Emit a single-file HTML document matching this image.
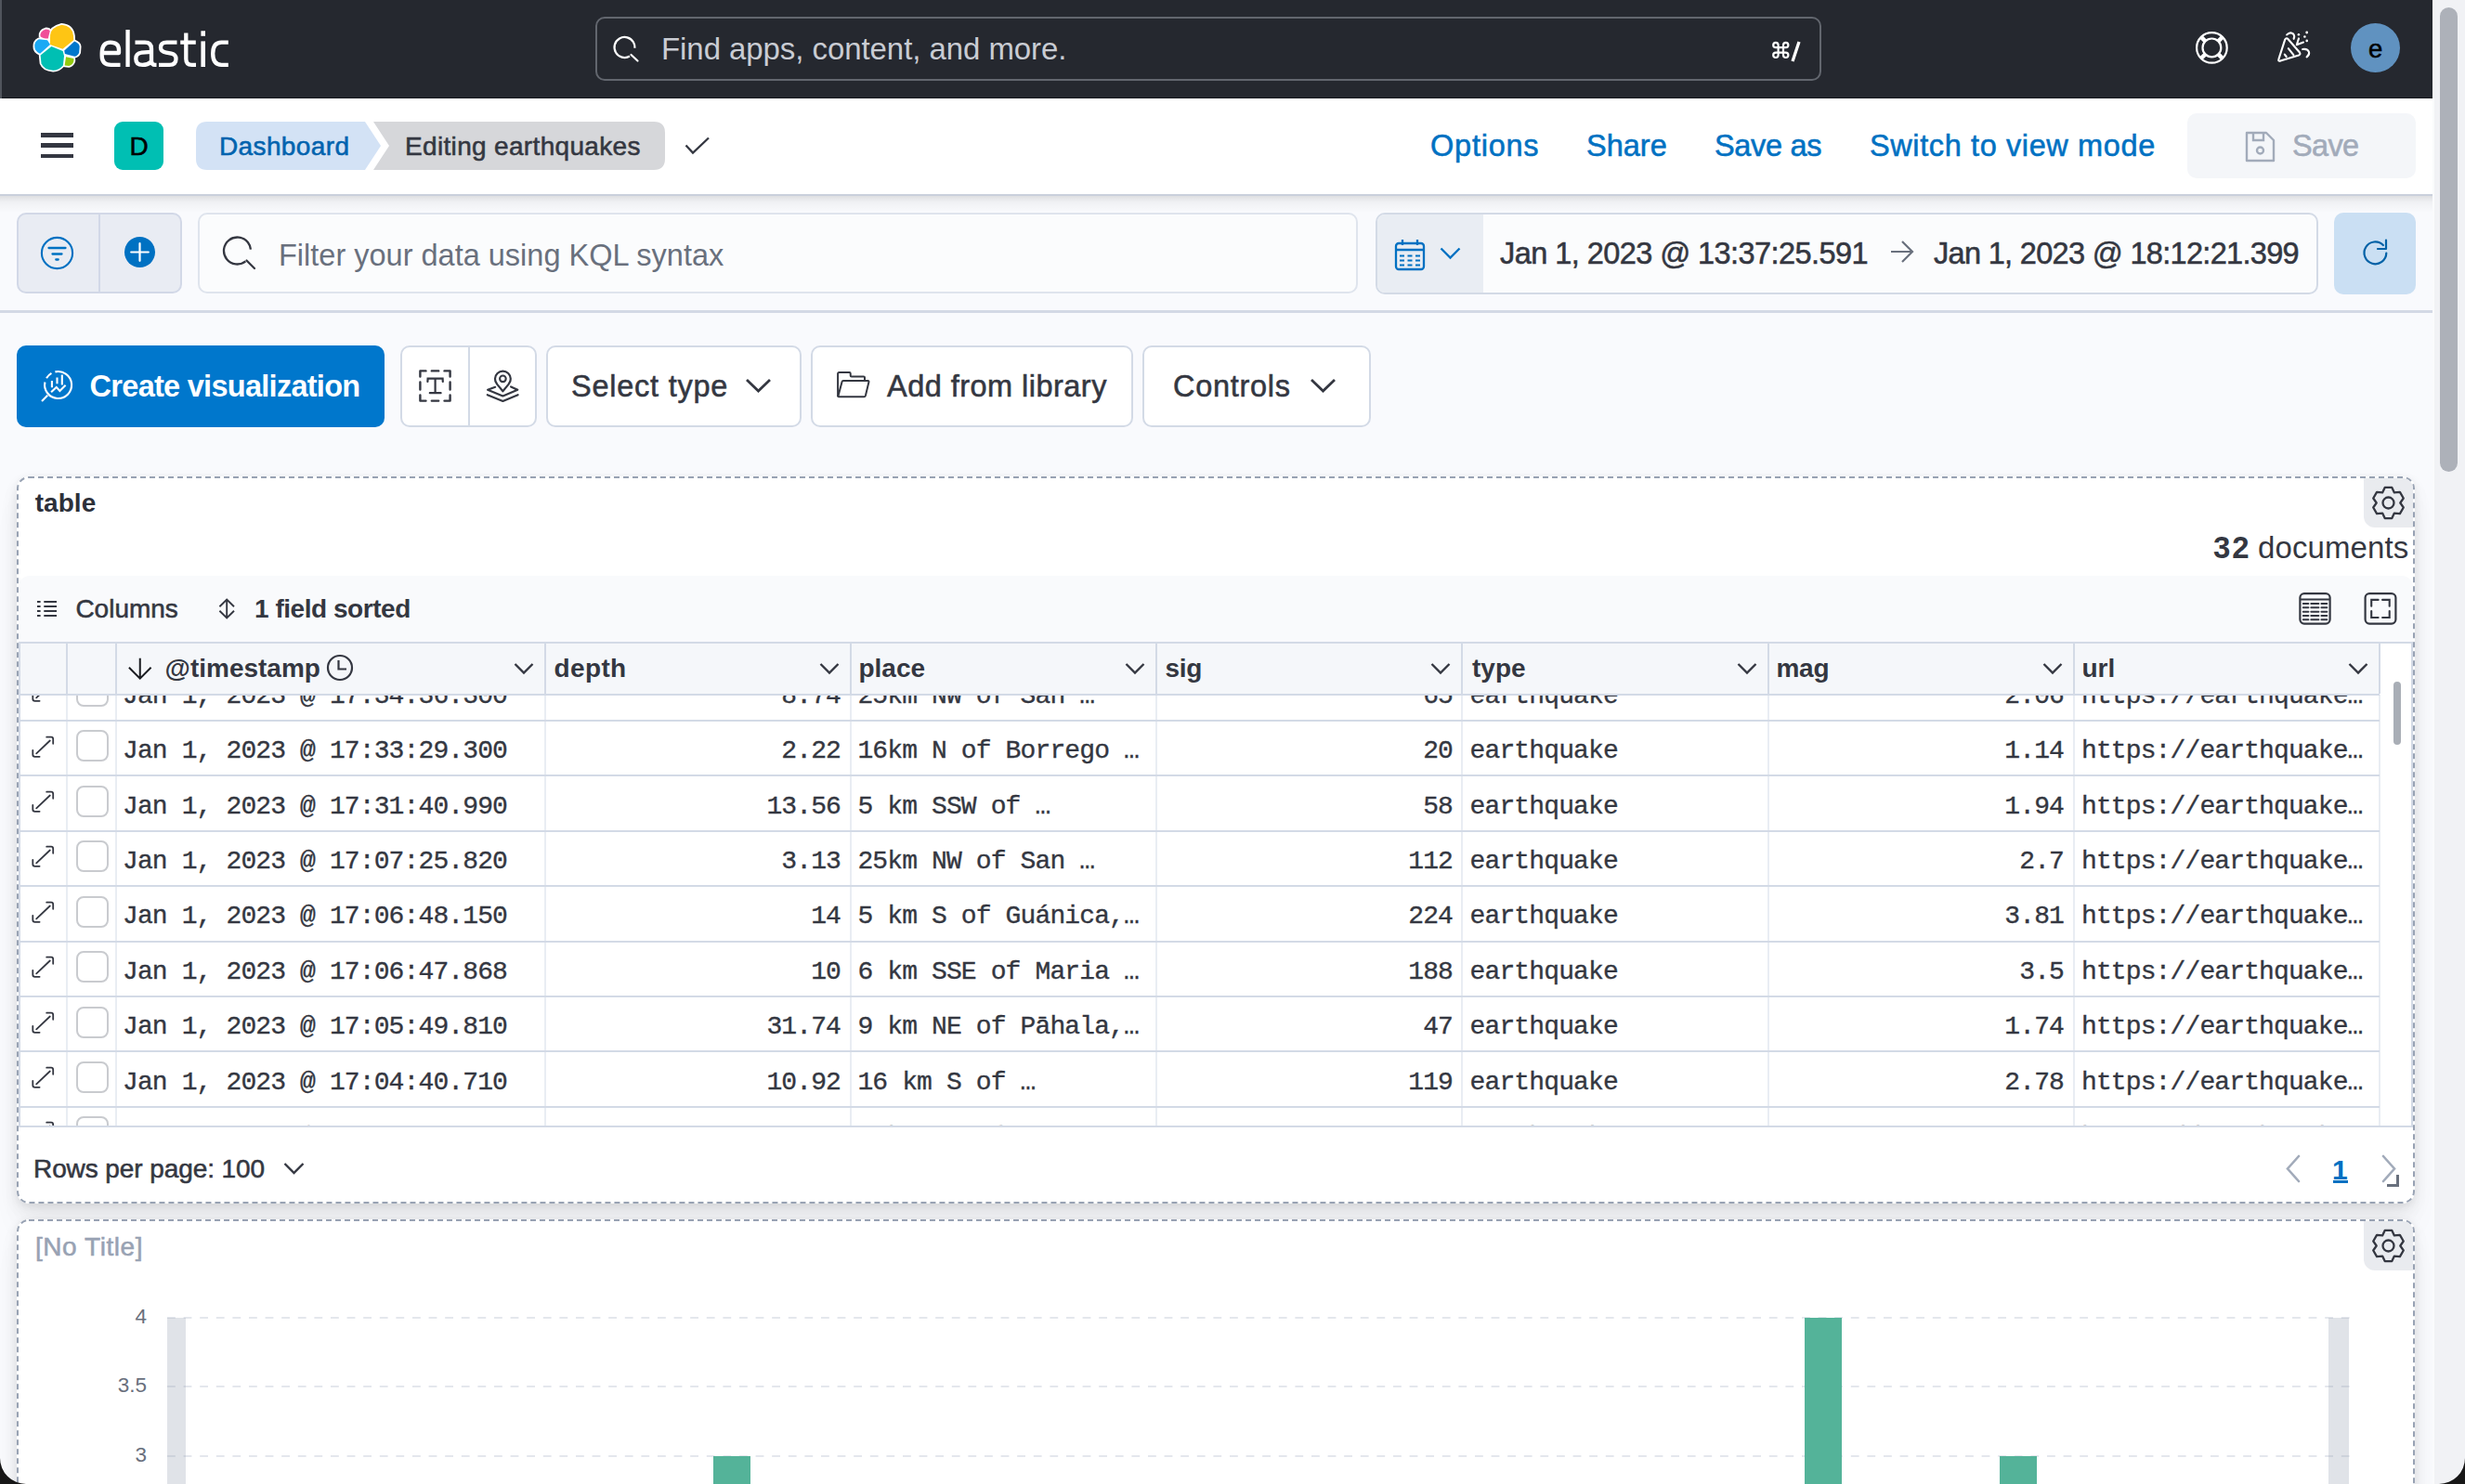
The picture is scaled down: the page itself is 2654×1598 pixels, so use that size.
<!DOCTYPE html>
<html><head><meta charset="utf-8"><title>Editing earthquakes - Dashboard - Elastic</title>
<style>
html,body{margin:0;padding:0;}
body{width:2654px;height:1598px;position:relative;overflow:hidden;background:#f9fafd;font-family:"Liberation Sans",sans-serif;}
.t{position:absolute;white-space:pre;line-height:1;}
.b{position:absolute;box-sizing:border-box;}
svg.b{overflow:visible;}
</style></head><body>
<div class="b" style="left:0px;top:0px;width:2619px;height:106px;background:#25282f"></div><div class="b" style="left:0px;top:0px;width:2px;height:106px;background:#50545c"></div><div class="b" style="left:2px;top:104.7px;width:2617px;height:1.2999999999999972px;background:#16191e"></div><svg class="b" style="left:0px;top:0px;" width="100" height="100" viewBox="0 0 100 100">
<g stroke="#fff" stroke-width="3.6" stroke-linejoin="round">
<path d="M49.3,31.4 Q53,31.6 53.8,33.2 L51.8,41.6 Q46,41.5 43.5,39.2 Q42.6,33.5 49.3,31.4Z"/>
<path d="M66.4,26.8 Q77.5,27.5 79,38.5 L79.2,43.2 L67.5,52.7 L53.9,48 L54.1,37.5 Q55,29.5 66.4,26.8Z"/>
<path d="M41.8,42.2 L51,43.2 L54,48 L43.1,57.8 Q37,55 37.3,50 Q36.8,45 41.8,42.2Z"/>
<path d="M55.4,50.1 L67.7,55 L69,60.3 L67.9,70.4 Q63,75.8 57.2,75.7 Q47,75 44.5,68.2 L43.6,59.4Z"/>
<path d="M80.2,44.4 Q85.5,46.5 85.7,50 L85.2,56.8 Q83.5,60.5 80.4,60.8 L69.9,58.1 L69.2,54.6Z"/>
<path d="M71,61.3 L79.3,63.1 Q79.8,66 79,67 Q77,70.8 74.2,70.9 L69.6,70.4Z"/>
</g>
<g stroke="none">
<path fill="#f04e98" d="M49.3,31.4 Q53,31.6 53.8,33.2 L51.8,41.6 Q46,41.5 43.5,39.2 Q42.6,33.5 49.3,31.4Z"/>
<path fill="#fec514" d="M66.4,26.8 Q77.5,27.5 79,38.5 L79.2,43.2 L67.5,52.7 L53.9,48 L54.1,37.5 Q55,29.5 66.4,26.8Z"/>
<path fill="#1ba9f5" d="M41.8,42.2 L51,43.2 L54,48 L43.1,57.8 Q37,55 37.3,50 Q36.8,45 41.8,42.2Z"/>
<path fill="#00bfb3" d="M55.4,50.1 L67.7,55 L69,60.3 L67.9,70.4 Q63,75.8 57.2,75.7 Q47,75 44.5,68.2 L43.6,59.4Z"/>
<path fill="#0077cc" d="M80.2,44.4 Q85.5,46.5 85.7,50 L85.2,56.8 Q83.5,60.5 80.4,60.8 L69.9,58.1 L69.2,54.6Z"/>
<path fill="#93c90e" d="M71,61.3 L79.3,63.1 Q79.8,66 79,67 Q77,70.8 74.2,70.9 L69.6,70.4Z"/>
</g></svg><svg class="b" style="left:0px;top:0px;" width="260" height="100" viewBox="0 0 260 100"><g fill="none" stroke="#fff" stroke-width="4.3" stroke-linejoin="round"><path d="M109.7,57 L128,57 L128,54 Q128,45.6 118.9,45.6 Q109.7,45.6 109.7,57.5 L109.7,60 Q109.7,69.9 119.5,69.9 L129.5,69.9"/><path d="M145.5,45.6 L156,45.6 Q163,45.6 163,52.5 L163,65.5 Q163,69.9 167,69.9 L168.5,69.9"/><path d="M163,55.8 L152.5,56.6 Q146.3,57.3 146.3,63.2 Q146.3,69.9 153.5,69.9 Q159,69.9 163,66.5"/><path d="M190.5,45.6 L179.5,45.6 Q173,45.6 173,51.2 Q173,55.6 179,56.6 L184.5,57.6 Q189.5,58.6 189.5,63.6 Q189.5,69.9 182.5,69.9 L171,69.9"/><path d="M200.3,35.6 L200.3,63.5 Q200.3,69.9 206.5,69.9 L211,69.9 M194.2,45.6 L210.8,45.6"/><path d="M245.8,45.6 L238.5,45.6 Q229.2,45.6 229.2,57.8 Q229.2,69.9 238.5,69.9 L245.8,69.9"/></g><rect x="135.4" y="32" width="4.3" height="40" fill="#fff"/><rect x="216.4" y="44.4" width="4.6" height="27.6" fill="#fff"/><rect x="216.4" y="33.3" width="4.6" height="5.5" fill="#fff"/></svg><div class="b" style="left:641px;top:17.5px;width:1320px;height:69.0px;border:2px solid #62666e;border-radius:10px;background:#25282f"></div><svg class="b" style="left:655px;top:36px;" width="36" height="34" viewBox="0 0 36 34"><circle cx="17.5" cy="15" r="11" fill="none" stroke="#fff" stroke-width="2.2" stroke-dasharray="58 11" transform="rotate(60 17.5 15)"/><path d="M24.5,23 L31.5,29.5" stroke="#fff" stroke-width="2.2" stroke-linecap="round"/></svg><div class="t" style="left:712.0px;top:36.0px;font-size:33px;color:#c9ccd3;font-weight:400;letter-spacing:-0.07px;font-family:'Liberation Sans', sans-serif;">Find apps, content, and more.</div><svg class="b" style="left:1900px;top:40px;" width="30" height="30" viewBox="0 0 30 30"><g transform="translate(9.2,5.8) scale(0.9) translate(-3,-3)"><path d="M15 6v12a3 3 0 1 0 3-3H6a3 3 0 1 0 3 3V6a3 3 0 1 0-3 3h12a3 3 0 1 0-3-3" fill="none" stroke="#fff" stroke-width="2.4"/></g></svg><svg class="b" style="left:1926px;top:44px;" width="14" height="24" viewBox="0 0 14 24"><path d="M11,1 L4,22" stroke="#fff" stroke-width="3.3" stroke-linecap="butt"/></svg><svg class="b" style="left:2361px;top:31px;" width="40" height="40" viewBox="0 0 40 40"><circle cx="20.4" cy="20.4" r="16.3" fill="none" stroke="#fff" stroke-width="2.2"/><circle cx="20.4" cy="20.4" r="9.9" fill="none" stroke="#fff" stroke-width="2.2"/><path d="M8.9,8.9 L13.4,13.4 M31.9,8.9 L27.4,13.4 M8.9,31.9 L13.4,27.4 M31.9,31.9 L27.4,27.4" stroke="#fff" stroke-width="4.4"/></svg><svg class="b" style="left:2440px;top:25px;" width="60" height="50" viewBox="0 0 60 50"><g fill="none" stroke="#fff" stroke-width="2.1" stroke-linecap="round" stroke-linejoin="round"><path d="M20.2,17.6 Q21.8,15.2 23.6,17.2 L36,31.5 Q37.3,33.6 35,34.4 L15.2,40.6 Q12.4,41.2 13.5,38.4 Z"/><path d="M23.8,27.2 L29.4,34.2 M19.8,33.6 L21.7,36"/><path d="M22.2,12.4 Q25.8,8.6 29.2,11.6 Q31,13.8 29.6,16.8"/><path d="M35,16.4 L32.8,23.2 L40,20.6"/><path d="M39.2,28 Q44.6,27.2 46,31 Q46.8,34 43.6,36.4"/></g><g fill="#fff"><circle cx="34.9" cy="12.2" r="1.3"/><circle cx="43.7" cy="10" r="1.4"/><circle cx="41.4" cy="14.5" r="1.3"/><circle cx="43.7" cy="18.9" r="1.3"/></g></svg><div class="b" style="left:2531px;top:25px;width:53px;height:53px;border-radius:50%;background:#6092c0"></div><div class="t" style="left:2550.0px;top:38.9px;font-size:27.5px;color:#000000;font-weight:400;letter-spacing:0px;font-family:'Liberation Sans', sans-serif;-webkit-text-stroke:0.55px #000000;">e</div><div class="b" style="left:2619px;top:0px;width:35px;height:1598px;background:#f1f2f5;border-left:2px solid #fafbfc"></div><div class="b" style="left:2627px;top:8px;width:19px;height:500px;background:#adb1b9;border-radius:10px"></div><div class="b" style="left:0px;top:106px;width:2619px;height:103px;background:#ffffff"></div><div class="b" style="left:44px;top:143px;width:35px;height:4.5px;background:#343741"></div><div class="b" style="left:44px;top:154px;width:35px;height:4.5px;background:#343741"></div><div class="b" style="left:44px;top:165.5px;width:35px;height:4.5px;background:#343741"></div><div class="b" style="left:123px;top:131px;width:53px;height:52px;background:#00bfb3;border-radius:9px"></div><div class="t" style="left:139.5px;top:144.2px;font-size:28px;color:#000000;font-weight:400;letter-spacing:0px;font-family:'Liberation Sans', sans-serif;-webkit-text-stroke:0.55px #000000;">D</div><svg class="b" style="left:205px;top:125px;" width="520" height="65" viewBox="0 0 520 65"><path d="M6,18 Q6,6 18,6 L188,6 L205,32 L188,58 L18,58 Q6,58 6,46 Z" fill="#d3e2f5"/><path d="M197,6 L499,6 Q511,6 511,18 L511,46 Q511,58 499,58 L197,58 L214,32 Z" fill="#d6d7da"/></svg><div class="t" style="left:236.0px;top:144.2px;font-size:28px;color:#0063ae;font-weight:400;letter-spacing:0.375px;font-family:'Liberation Sans', sans-serif;-webkit-text-stroke:0.55px #0063ae;">Dashboard</div><div class="t" style="left:436.0px;top:144.2px;font-size:28px;color:#343741;font-weight:400;letter-spacing:0.333px;font-family:'Liberation Sans', sans-serif;-webkit-text-stroke:0.55px #343741;">Editing earthquakes</div><svg class="b" style="left:735px;top:145px;" width="32" height="24" viewBox="0 0 32 24"><path d="M3.5,11.5 L11,19.5 L28,3.5" fill="none" stroke="#343741" stroke-width="2.3"/></svg><div class="t" style="left:1540.0px;top:140.9px;font-size:32.5px;color:#0071c2;font-weight:400;letter-spacing:0.77px;font-family:'Liberation Sans', sans-serif;-webkit-text-stroke:0.55px #0071c2;">Options</div><div class="t" style="left:1708.0px;top:140.9px;font-size:32.5px;color:#0071c2;font-weight:400;letter-spacing:0px;font-family:'Liberation Sans', sans-serif;-webkit-text-stroke:0.55px #0071c2;">Share</div><div class="t" style="left:1846.0px;top:140.9px;font-size:32.5px;color:#0071c2;font-weight:400;letter-spacing:-0.33px;font-family:'Liberation Sans', sans-serif;-webkit-text-stroke:0.55px #0071c2;">Save as</div><div class="t" style="left:2013.0px;top:140.9px;font-size:32.5px;color:#0071c2;font-weight:400;letter-spacing:0.61px;font-family:'Liberation Sans', sans-serif;-webkit-text-stroke:0.55px #0071c2;">Switch to view mode</div><div class="b" style="left:2355px;top:122px;width:246px;height:70px;background:#f4f6f9;border-radius:10px"></div><svg class="b" style="left:2416px;top:140px;" width="36" height="36" viewBox="0 0 36 36"><path d="M3,3 L24,3 L32,11 L32,33 L3,33 Z" fill="none" stroke="#a2abba" stroke-width="2.4" stroke-linejoin="round"/><path d="M10,3 L10,11 L21,11 L21,3" fill="none" stroke="#a2abba" stroke-width="2.4"/><circle cx="17.5" cy="22" r="3.5" fill="none" stroke="#a2abba" stroke-width="2.4"/></svg><div class="t" style="left:2468.0px;top:140.9px;font-size:32.5px;color:#a2abba;font-weight:400;letter-spacing:-0.67px;font-family:'Liberation Sans', sans-serif;-webkit-text-stroke:0.55px #a2abba;">Save</div><div class="b" style="left:0px;top:209px;width:2619px;height:126px;background:#f9fafd"></div><div class="b" style="left:0px;top:209px;width:2619px;height:2px;background:#c9d0dc"></div><div class="b" style="left:0px;top:211px;width:2619px;height:18px;background:linear-gradient(rgba(0,0,0,0.11),rgba(0,0,0,0.04) 35%,rgba(0,0,0,0))"></div><div class="b" style="left:0px;top:334px;width:2619px;height:3px;background:#d3d9e5"></div><div class="b" style="left:18px;top:229px;width:178px;height:87px;background:#e9ecf3;border:2px solid #d2d8e7;border-radius:10px"></div><div class="b" style="left:106px;top:230px;width:2px;height:85px;background:#d2d8e7"></div><svg class="b" style="left:42px;top:253px;" width="40" height="40" viewBox="0 0 40 40"><circle cx="19.5" cy="19.5" r="16.6" fill="none" stroke="#0071c2" stroke-width="2.1"/><path d="M10.5,14 L28.5,14 M14.5,20.5 L24.5,20.5 M18.3,26.5 L20.7,26.5" stroke="#0071c2" stroke-width="2.3" stroke-linecap="round"/></svg><svg class="b" style="left:132px;top:254px;" width="38" height="38" viewBox="0 0 38 38"><circle cx="18.5" cy="17.5" r="16.5" fill="#0071c2"/><path d="M18.5,8.2 L18.5,26.8 M9.2,17.5 L27.8,17.5" stroke="#fff" stroke-width="2.2" stroke-linecap="round"/></svg><div class="b" style="left:213px;top:229px;width:1249px;height:87px;background:#fbfcfd;border:2px solid #dfe4ed;border-radius:10px"></div><svg class="b" style="left:236px;top:252px;" width="44" height="42" viewBox="0 0 44 42"><circle cx="19.5" cy="18" r="14.5" fill="none" stroke="#343741" stroke-width="2.3" stroke-dasharray="76 15" transform="rotate(52 19.5 18)"/><path d="M29.5,28.5 L38,37" stroke="#343741" stroke-width="2.3" stroke-linecap="round"/></svg><div class="t" style="left:300.0px;top:259.0px;font-size:32.5px;color:#69707d;font-weight:400;letter-spacing:0px;font-family:'Liberation Sans', sans-serif;">Filter your data using KQL syntax</div><div class="b" style="left:1481px;top:229px;width:1015px;height:88px;background:#fbfcfd;border:2px solid #d3dae6;border-radius:10px"></div><div class="b" style="left:1483px;top:231px;width:114px;height:84px;background:#e9edf3;border-radius:8px 0 0 8px"></div><svg class="b" style="left:1500px;top:256px;" width="40" height="40" viewBox="0 0 40 40"><rect x="3" y="6" width="30" height="28" rx="3" fill="none" stroke="#0071c2" stroke-width="2.3"/><path d="M3,13 L33,13 M10,2 L10,8 M26,2 L26,8" stroke="#0071c2" stroke-width="2.3"/><path d="M7,19.5 L12,19.5 M15.5,19.5 L20.5,19.5 M24,19.5 L29,19.5 M7,24.5 L12,24.5 M15.5,24.5 L20.5,24.5 M24,24.5 L29,24.5 M7,29.5 L12,29.5 M15.5,29.5 L20.5,29.5 M24,29.5 L29,29.5" stroke="#0071c2" stroke-width="2"/></svg><svg class="b" style="left:1549px;top:265px;" width="26" height="16" viewBox="0 0 26 16"><path d="M2.5,2.5 L12.5,12.5 L22.5,2.5" fill="none" stroke="#0071c2" stroke-width="2.4"/></svg><div class="t" style="left:1615.0px;top:256.8px;font-size:32.5px;color:#343741;font-weight:400;letter-spacing:-0.56px;font-family:'Liberation Sans', sans-serif;-webkit-text-stroke:0.55px #343741;">Jan 1, 2023 @ 13:37:25.591</div><svg class="b" style="left:2034px;top:257px;" width="28" height="28" viewBox="0 0 28 28"><path d="M2,14 L25,14 M14,3 L25,14 L14,25" fill="none" stroke="#69707d" stroke-width="2.2"/></svg><div class="t" style="left:2082.0px;top:256.8px;font-size:32.5px;color:#343741;font-weight:400;letter-spacing:-0.68px;font-family:'Liberation Sans', sans-serif;-webkit-text-stroke:0.55px #343741;">Jan 1, 2023 @ 18:12:21.399</div><div class="b" style="left:2513px;top:229px;width:88px;height:88px;background:#cadff3;border-radius:10px"></div><svg class="b" style="left:2537px;top:252px;" width="40" height="40" viewBox="0 0 40 40"><path d="M32.3,20.6 A11.9,11.9 0 1 1 28.9,12" fill="none" stroke="#0061a6" stroke-width="2.2" stroke-linecap="round"/><path d="M23,16 L32,16 L32,6.5" fill="none" stroke="#0061a6" stroke-width="2.2" stroke-linecap="round" stroke-linejoin="round"/></svg><div class="b" style="left:18px;top:372px;width:396px;height:88px;background:#0077cc;border-radius:10px"></div><svg class="b" style="left:30px;top:385px;" width="60" height="60" viewBox="0 0 60 60"><g fill="none" stroke="#fff" stroke-width="2.1"><path d="M29.39,15.36 A14.5,14.5 0 1 1 18.42,26.49"/><path d="M20.04,22.25 A14.5,14.5 0 0 1 25.46,16.88"/><path d="M15,46.9 L21.2,40.7"/><path d="M25.9,25 L25.9,32.3 M31.5,21.4 L31.5,28.3 M36.8,18.6 L36.8,29.5"/><path d="M25.1,37.2 L30.7,31.9 L34.4,36 L40.6,29.7"/></g></svg><div class="t" style="left:96.6px;top:400.4px;font-size:32.5px;color:#ffffff;font-weight:700;letter-spacing:-0.72px;font-family:'Liberation Sans', sans-serif;">Create visualization</div><div class="b" style="left:431px;top:372px;width:147px;height:88px;background:#fff;border:2px solid #d3dae6;border-radius:10px"></div><div class="b" style="left:504px;top:373px;width:2px;height:86px;background:#d3dae6"></div><svg class="b" style="left:449px;top:396px;" width="40" height="40" viewBox="0 0 40 40"><path d="M3.4,9.5 L3.4,3.4 L9.5,3.4 M15.8,3.4 L23.2,3.4 M29.5,3.4 L35.6,3.4 L35.6,9.5 M35.6,15.4 L35.6,23.6 M35.6,29.5 L35.6,35.6 L29.5,35.6 M23.2,35.6 L15.8,35.6 M9.5,35.6 L3.4,35.6 L3.4,29.5 M3.4,23.6 L3.4,15.4" fill="none" stroke="#343741" stroke-width="2.4" stroke-linecap="round" stroke-linejoin="round"/><path d="M11.4,15 L11.6,11.7 L27.6,11.7 L27.8,15 M19.6,11.7 L19.6,27.2 M13.8,27.2 L25.6,27.2" fill="none" stroke="#343741" stroke-width="2.2" stroke-linecap="round"/></svg><svg class="b" style="left:521px;top:396px;" width="42" height="40" viewBox="0 0 42 40"><path d="M20.4,25.3 L14.1,17.6 A8.4,8.4 0 1 1 26.7,17.6 Z" fill="none" stroke="#343741" stroke-width="2.2" stroke-linejoin="round"/><circle cx="20.4" cy="11.8" r="3.3" fill="none" stroke="#343741" stroke-width="2.1"/><path d="M12.2,20.8 L4.1,23.7 L20.4,30.5 L36.3,23.7 L29.1,20.4" fill="none" stroke="#343741" stroke-width="2.2" stroke-linejoin="round" stroke-linecap="round"/><path d="M3.8,29.2 L20.4,36 L36.6,29.2" fill="none" stroke="#343741" stroke-width="2.2" stroke-linecap="round" stroke-linejoin="round"/></svg><div class="b" style="left:588px;top:372px;width:275px;height:88px;background:#fff;border:2px solid #d3dae6;border-radius:10px"></div><div class="t" style="left:615.0px;top:400.4px;font-size:32.5px;color:#343741;font-weight:400;letter-spacing:0.76px;font-family:'Liberation Sans', sans-serif;-webkit-text-stroke:0.55px #343741;">Select type</div><svg class="b" style="left:801px;top:406px;" width="32" height="20" viewBox="0 0 32 20"><path d="M3,3 L15.5,15 L28,3" fill="none" stroke="#343741" stroke-width="2.8"/></svg><div class="b" style="left:873px;top:372px;width:347px;height:88px;background:#fff;border:2px solid #d3dae6;border-radius:10px"></div><svg class="b" style="left:899px;top:397px;" width="40" height="34" viewBox="0 0 40 34"><path d="M3.1,30.3 L3.1,5.5 Q3.1,4 4.6,4 L15.5,4 Q16.7,4 16.7,5.2 L16.7,7.2 Q16.7,8.4 17.9,8.4 L30.8,8.4 Q32,8.4 32,9.6 L32,12.7" fill="none" stroke="#343741" stroke-width="2" stroke-linejoin="round"/><path d="M8.8,13.1 L35.4,13.1 Q36.8,13.3 36.4,14.6 L32.9,29 Q32.5,30.3 31.2,30.3 L4.2,30.3 Q3.2,30.3 3.5,29.3 L7.6,14 Q7.9,13.1 8.8,13.1 Z" fill="none" stroke="#343741" stroke-width="2" stroke-linejoin="round"/></svg><div class="t" style="left:955.0px;top:400.4px;font-size:32.5px;color:#343741;font-weight:400;letter-spacing:0.467px;font-family:'Liberation Sans', sans-serif;-webkit-text-stroke:0.55px #343741;">Add from library</div><div class="b" style="left:1230px;top:372px;width:246px;height:88px;background:#fff;border:2px solid #d3dae6;border-radius:10px"></div><div class="t" style="left:1263.0px;top:400.4px;font-size:32.5px;color:#343741;font-weight:400;letter-spacing:0.714px;font-family:'Liberation Sans', sans-serif;-webkit-text-stroke:0.55px #343741;">Controls</div><svg class="b" style="left:1409px;top:406px;" width="32" height="20" viewBox="0 0 32 20"><path d="M3,3 L15.5,15 L28,3" fill="none" stroke="#343741" stroke-width="2.8"/></svg><div class="b" style="left:18px;top:513px;width:2582px;height:783px;background:#fff;border-radius:13px;box-shadow:0 2px 9px rgba(0,0,0,.06),0 6px 18px rgba(0,0,0,.05),0 13px 26px rgba(0,0,0,.04),0 30px 33px rgba(0,0,0,.03)"></div><div class="t" style="left:37.7px;top:528.2px;font-size:28px;color:#2d3039;font-weight:700;letter-spacing:0.05px;font-family:'Liberation Sans', sans-serif;">table</div><div class="t" style="left:2383.0px;top:572.8px;font-size:33px;color:#343741;font-weight:700;letter-spacing:2px;font-family:'Liberation Sans', sans-serif;">32</div><div class="t" style="left:2431.0px;top:572.8px;font-size:33px;color:#343741;font-weight:400;letter-spacing:0.1px;font-family:'Liberation Sans', sans-serif;">documents</div><div class="b" style="left:20px;top:620px;width:2578px;height:72px;background:#f9fafc;border-radius:12px 12px 0 0"></div><svg class="b" style="left:38px;top:644px;" width="26" height="24" viewBox="0 0 26 24"><path d="M2,4 L5.6,4 M9.3,4 L23,4 M2,9 L5.6,9 M9.3,9 L23,9 M2,14 L5.6,14 M9.3,14 L23,14 M2,19 L5.6,19 M9.3,19 L23,19" stroke="#343741" stroke-width="2"/></svg><div class="t" style="left:81.4px;top:642.2px;font-size:28px;color:#343741;font-weight:400;letter-spacing:0px;font-family:'Liberation Sans', sans-serif;-webkit-text-stroke:0.55px #343741;">Columns</div><svg class="b" style="left:232px;top:642px;" width="24" height="28" viewBox="0 0 24 28"><path d="M12.2,3.5 L12.2,23.5 M4.4,11.2 L12.2,3.5 L20,11.2 M4.4,15.8 L12.2,23.5 L20,15.8" fill="none" stroke="#343741" stroke-width="1.9"/></svg><div class="t" style="left:274.0px;top:642.2px;font-size:28px;color:#343741;font-weight:700;letter-spacing:-0.46px;font-family:'Liberation Sans', sans-serif;">1 field sorted</div><svg class="b" style="left:2473px;top:636px;" width="40" height="40" viewBox="0 0 40 40"><rect x="3.4" y="3.1" width="32.2" height="32.5" rx="4.5" fill="none" stroke="#343741" stroke-width="2.2"/><path d="M3.4,9.5 L35.6,9.5" stroke="#343741" stroke-width="2.2"/><path d="M6.8,14 L12.4,14 M15.3,14 L23.4,14 M26.4,14 L32.3,14 M6.8,18.3 L12.4,18.3 M15.3,18.3 L23.4,18.3 M26.4,18.3 L32.3,18.3 M6.8,22.8 L12.4,22.8 M15.3,22.8 L23.4,22.8 M26.4,22.8 L32.3,22.8 M6.8,27.1 L12.4,27.1 M15.3,27.1 L23.4,27.1 M26.4,27.1 L32.3,27.1 M6.8,31.3 L12.4,31.3 M15.3,31.3 L23.4,31.3 M26.4,31.3 L32.3,31.3" stroke="#343741" stroke-width="2" stroke-linecap="round"/></svg><svg class="b" style="left:2543px;top:636px;" width="40" height="40" viewBox="0 0 40 40"><rect x="3.6" y="3.1" width="32.8" height="32.5" rx="4.5" fill="none" stroke="#343741" stroke-width="2.2"/><path d="M10.2,16.8 L10.2,9.9 L17.6,9.9 M22.1,9.9 L29.7,9.9 L29.7,16.8 M10.2,22 L10.2,29 L17.6,29 M22.1,29 L29.7,29 L29.7,22" fill="none" stroke="#343741" stroke-width="2.1" stroke-linecap="round"/></svg><div class="b" style="left:20px;top:748px;width:2578px;height:465px;overflow:hidden;background:#fff"><div class="b" style="left:51px;top:0px;width:2px;height:465px;background:#e9edf3"></div><div class="b" style="left:104px;top:0px;width:2px;height:465px;background:#e9edf3"></div><div class="b" style="left:566px;top:0px;width:2px;height:465px;background:#e9edf3"></div><div class="b" style="left:895px;top:0px;width:2px;height:465px;background:#e9edf3"></div><div class="b" style="left:1224px;top:0px;width:2px;height:465px;background:#e9edf3"></div><div class="b" style="left:1553px;top:0px;width:2px;height:465px;background:#e9edf3"></div><div class="b" style="left:1883px;top:0px;width:2px;height:465px;background:#e9edf3"></div><div class="b" style="left:2212px;top:0px;width:2px;height:465px;background:#e9edf3"></div><div class="b" style="left:2541px;top:0px;width:2px;height:465px;background:#e9edf3"></div><div class="b" style="left:0px;top:-32.39999999999998px;width:2542px;height:2.0px;background:#d3dae6"></div><svg class="b" style="left:12px;top:-17.9px;" width="30" height="28" viewBox="0 0 30 28"><path d="M7.2,21.3 L21.8,7.5 M18.2,3.7 L23,3.7 Q25.2,3.7 25.2,6 L25.2,10.8 M3.3,18 L3.3,22.5 Q3.3,24.8 5.6,24.8 L10.6,24.8" fill="none" stroke="#343741" stroke-width="1.8" stroke-linecap="round"/></svg><div class="b" style="left:62px;top:-21px;width:35px;height:34px;border:2px solid #c9cbcf;border-radius:8px;background:#fff"></div><div class="t" style="left:112.0px;top:-12.2px;font-size:28px;color:#343741;font-weight:400;letter-spacing:-0.88px;font-family:'Liberation Mono', monospace;-webkit-text-stroke:0.35px #343741;">Jan 1, 2023 @ 17:34:36.300</div><div class="t" style="right:1693.0px;top:-12.2px;font-size:28px;color:#343741;letter-spacing:-0.88px;-webkit-text-stroke:0.35px #343741;font-family:'Liberation Mono', monospace;text-align:right">8.74</div><div class="t" style="left:903.4px;top:-12.2px;font-size:28px;color:#343741;font-weight:400;letter-spacing:-0.88px;font-family:'Liberation Mono', monospace;-webkit-text-stroke:0.35px #343741;">25km NW of San …</div><div class="t" style="right:1034.0px;top:-12.2px;font-size:28px;color:#343741;letter-spacing:-0.88px;-webkit-text-stroke:0.35px #343741;font-family:'Liberation Mono', monospace;text-align:right">65</div><div class="t" style="left:1562.6px;top:-12.2px;font-size:28px;color:#343741;font-weight:400;letter-spacing:-0.88px;font-family:'Liberation Mono', monospace;-webkit-text-stroke:0.35px #343741;">earthquake</div><div class="t" style="right:376.0px;top:-12.2px;font-size:28px;color:#343741;letter-spacing:-0.88px;-webkit-text-stroke:0.35px #343741;font-family:'Liberation Mono', monospace;text-align:right">2.06</div><div class="t" style="left:2221.0px;top:-12.2px;font-size:28px;color:#343741;font-weight:400;letter-spacing:-0.88px;font-family:'Liberation Mono', monospace;-webkit-text-stroke:0.35px #343741;">https://earthquake…</div><div class="b" style="left:0px;top:27.0px;width:2542px;height:2.0px;background:#d3dae6"></div><svg class="b" style="left:12px;top:41.5px;" width="30" height="28" viewBox="0 0 30 28"><path d="M7.2,21.3 L21.8,7.5 M18.2,3.7 L23,3.7 Q25.2,3.7 25.2,6 L25.2,10.8 M3.3,18 L3.3,22.5 Q3.3,24.8 5.6,24.8 L10.6,24.8" fill="none" stroke="#343741" stroke-width="1.8" stroke-linecap="round"/></svg><div class="b" style="left:62px;top:38px;width:35px;height:34px;border:2px solid #c9cbcf;border-radius:8px;background:#fff"></div><div class="t" style="left:112.0px;top:47.2px;font-size:28px;color:#343741;font-weight:400;letter-spacing:-0.88px;font-family:'Liberation Mono', monospace;-webkit-text-stroke:0.35px #343741;">Jan 1, 2023 @ 17:33:29.300</div><div class="t" style="right:1693.0px;top:47.2px;font-size:28px;color:#343741;letter-spacing:-0.88px;-webkit-text-stroke:0.35px #343741;font-family:'Liberation Mono', monospace;text-align:right">2.22</div><div class="t" style="left:903.4px;top:47.2px;font-size:28px;color:#343741;font-weight:400;letter-spacing:-0.88px;font-family:'Liberation Mono', monospace;-webkit-text-stroke:0.35px #343741;">16km N of Borrego …</div><div class="t" style="right:1034.0px;top:47.2px;font-size:28px;color:#343741;letter-spacing:-0.88px;-webkit-text-stroke:0.35px #343741;font-family:'Liberation Mono', monospace;text-align:right">20</div><div class="t" style="left:1562.6px;top:47.2px;font-size:28px;color:#343741;font-weight:400;letter-spacing:-0.88px;font-family:'Liberation Mono', monospace;-webkit-text-stroke:0.35px #343741;">earthquake</div><div class="t" style="right:376.0px;top:47.2px;font-size:28px;color:#343741;letter-spacing:-0.88px;-webkit-text-stroke:0.35px #343741;font-family:'Liberation Mono', monospace;text-align:right">1.14</div><div class="t" style="left:2221.0px;top:47.2px;font-size:28px;color:#343741;font-weight:400;letter-spacing:-0.88px;font-family:'Liberation Mono', monospace;-webkit-text-stroke:0.35px #343741;">https://earthquake…</div><div class="b" style="left:0px;top:86.39999999999998px;width:2542px;height:2.0px;background:#d3dae6"></div><svg class="b" style="left:12px;top:100.9px;" width="30" height="28" viewBox="0 0 30 28"><path d="M7.2,21.3 L21.8,7.5 M18.2,3.7 L23,3.7 Q25.2,3.7 25.2,6 L25.2,10.8 M3.3,18 L3.3,22.5 Q3.3,24.8 5.6,24.8 L10.6,24.8" fill="none" stroke="#343741" stroke-width="1.8" stroke-linecap="round"/></svg><div class="b" style="left:62px;top:98px;width:35px;height:34px;border:2px solid #c9cbcf;border-radius:8px;background:#fff"></div><div class="t" style="left:112.0px;top:106.6px;font-size:28px;color:#343741;font-weight:400;letter-spacing:-0.88px;font-family:'Liberation Mono', monospace;-webkit-text-stroke:0.35px #343741;">Jan 1, 2023 @ 17:31:40.990</div><div class="t" style="right:1693.0px;top:106.6px;font-size:28px;color:#343741;letter-spacing:-0.88px;-webkit-text-stroke:0.35px #343741;font-family:'Liberation Mono', monospace;text-align:right">13.56</div><div class="t" style="left:903.4px;top:106.6px;font-size:28px;color:#343741;font-weight:400;letter-spacing:-0.88px;font-family:'Liberation Mono', monospace;-webkit-text-stroke:0.35px #343741;">5 km SSW of …</div><div class="t" style="right:1034.0px;top:106.6px;font-size:28px;color:#343741;letter-spacing:-0.88px;-webkit-text-stroke:0.35px #343741;font-family:'Liberation Mono', monospace;text-align:right">58</div><div class="t" style="left:1562.6px;top:106.6px;font-size:28px;color:#343741;font-weight:400;letter-spacing:-0.88px;font-family:'Liberation Mono', monospace;-webkit-text-stroke:0.35px #343741;">earthquake</div><div class="t" style="right:376.0px;top:106.6px;font-size:28px;color:#343741;letter-spacing:-0.88px;-webkit-text-stroke:0.35px #343741;font-family:'Liberation Mono', monospace;text-align:right">1.94</div><div class="t" style="left:2221.0px;top:106.6px;font-size:28px;color:#343741;font-weight:400;letter-spacing:-0.88px;font-family:'Liberation Mono', monospace;-webkit-text-stroke:0.35px #343741;">https://earthquake…</div><div class="b" style="left:0px;top:145.79999999999995px;width:2542px;height:2.0px;background:#d3dae6"></div><svg class="b" style="left:12px;top:160.3px;" width="30" height="28" viewBox="0 0 30 28"><path d="M7.2,21.3 L21.8,7.5 M18.2,3.7 L23,3.7 Q25.2,3.7 25.2,6 L25.2,10.8 M3.3,18 L3.3,22.5 Q3.3,24.8 5.6,24.8 L10.6,24.8" fill="none" stroke="#343741" stroke-width="1.8" stroke-linecap="round"/></svg><div class="b" style="left:62px;top:157px;width:35px;height:34px;border:2px solid #c9cbcf;border-radius:8px;background:#fff"></div><div class="t" style="left:112.0px;top:166.0px;font-size:28px;color:#343741;font-weight:400;letter-spacing:-0.88px;font-family:'Liberation Mono', monospace;-webkit-text-stroke:0.35px #343741;">Jan 1, 2023 @ 17:07:25.820</div><div class="t" style="right:1693.0px;top:166.0px;font-size:28px;color:#343741;letter-spacing:-0.88px;-webkit-text-stroke:0.35px #343741;font-family:'Liberation Mono', monospace;text-align:right">3.13</div><div class="t" style="left:903.4px;top:166.0px;font-size:28px;color:#343741;font-weight:400;letter-spacing:-0.88px;font-family:'Liberation Mono', monospace;-webkit-text-stroke:0.35px #343741;">25km NW of San …</div><div class="t" style="right:1034.0px;top:166.0px;font-size:28px;color:#343741;letter-spacing:-0.88px;-webkit-text-stroke:0.35px #343741;font-family:'Liberation Mono', monospace;text-align:right">112</div><div class="t" style="left:1562.6px;top:166.0px;font-size:28px;color:#343741;font-weight:400;letter-spacing:-0.88px;font-family:'Liberation Mono', monospace;-webkit-text-stroke:0.35px #343741;">earthquake</div><div class="t" style="right:376.0px;top:166.0px;font-size:28px;color:#343741;letter-spacing:-0.88px;-webkit-text-stroke:0.35px #343741;font-family:'Liberation Mono', monospace;text-align:right">2.7</div><div class="t" style="left:2221.0px;top:166.0px;font-size:28px;color:#343741;font-weight:400;letter-spacing:-0.88px;font-family:'Liberation Mono', monospace;-webkit-text-stroke:0.35px #343741;">https://earthquake…</div><div class="b" style="left:0px;top:205.20000000000005px;width:2542px;height:2.0px;background:#d3dae6"></div><svg class="b" style="left:12px;top:219.7px;" width="30" height="28" viewBox="0 0 30 28"><path d="M7.2,21.3 L21.8,7.5 M18.2,3.7 L23,3.7 Q25.2,3.7 25.2,6 L25.2,10.8 M3.3,18 L3.3,22.5 Q3.3,24.8 5.6,24.8 L10.6,24.8" fill="none" stroke="#343741" stroke-width="1.8" stroke-linecap="round"/></svg><div class="b" style="left:62px;top:217px;width:35px;height:34px;border:2px solid #c9cbcf;border-radius:8px;background:#fff"></div><div class="t" style="left:112.0px;top:225.4px;font-size:28px;color:#343741;font-weight:400;letter-spacing:-0.88px;font-family:'Liberation Mono', monospace;-webkit-text-stroke:0.35px #343741;">Jan 1, 2023 @ 17:06:48.150</div><div class="t" style="right:1693.0px;top:225.4px;font-size:28px;color:#343741;letter-spacing:-0.88px;-webkit-text-stroke:0.35px #343741;font-family:'Liberation Mono', monospace;text-align:right">14</div><div class="t" style="left:903.4px;top:225.4px;font-size:28px;color:#343741;font-weight:400;letter-spacing:-0.88px;font-family:'Liberation Mono', monospace;-webkit-text-stroke:0.35px #343741;">5 km S of Guánica,…</div><div class="t" style="right:1034.0px;top:225.4px;font-size:28px;color:#343741;letter-spacing:-0.88px;-webkit-text-stroke:0.35px #343741;font-family:'Liberation Mono', monospace;text-align:right">224</div><div class="t" style="left:1562.6px;top:225.4px;font-size:28px;color:#343741;font-weight:400;letter-spacing:-0.88px;font-family:'Liberation Mono', monospace;-webkit-text-stroke:0.35px #343741;">earthquake</div><div class="t" style="right:376.0px;top:225.4px;font-size:28px;color:#343741;letter-spacing:-0.88px;-webkit-text-stroke:0.35px #343741;font-family:'Liberation Mono', monospace;text-align:right">3.81</div><div class="t" style="left:2221.0px;top:225.4px;font-size:28px;color:#343741;font-weight:400;letter-spacing:-0.88px;font-family:'Liberation Mono', monospace;-webkit-text-stroke:0.35px #343741;">https://earthquake…</div><div class="b" style="left:0px;top:264.6px;width:2542px;height:2.0px;background:#d3dae6"></div><svg class="b" style="left:12px;top:279.1px;" width="30" height="28" viewBox="0 0 30 28"><path d="M7.2,21.3 L21.8,7.5 M18.2,3.7 L23,3.7 Q25.2,3.7 25.2,6 L25.2,10.8 M3.3,18 L3.3,22.5 Q3.3,24.8 5.6,24.8 L10.6,24.8" fill="none" stroke="#343741" stroke-width="1.8" stroke-linecap="round"/></svg><div class="b" style="left:62px;top:276px;width:35px;height:34px;border:2px solid #c9cbcf;border-radius:8px;background:#fff"></div><div class="t" style="left:112.0px;top:284.8px;font-size:28px;color:#343741;font-weight:400;letter-spacing:-0.88px;font-family:'Liberation Mono', monospace;-webkit-text-stroke:0.35px #343741;">Jan 1, 2023 @ 17:06:47.868</div><div class="t" style="right:1693.0px;top:284.8px;font-size:28px;color:#343741;letter-spacing:-0.88px;-webkit-text-stroke:0.35px #343741;font-family:'Liberation Mono', monospace;text-align:right">10</div><div class="t" style="left:903.4px;top:284.8px;font-size:28px;color:#343741;font-weight:400;letter-spacing:-0.88px;font-family:'Liberation Mono', monospace;-webkit-text-stroke:0.35px #343741;">6 km SSE of Maria …</div><div class="t" style="right:1034.0px;top:284.8px;font-size:28px;color:#343741;letter-spacing:-0.88px;-webkit-text-stroke:0.35px #343741;font-family:'Liberation Mono', monospace;text-align:right">188</div><div class="t" style="left:1562.6px;top:284.8px;font-size:28px;color:#343741;font-weight:400;letter-spacing:-0.88px;font-family:'Liberation Mono', monospace;-webkit-text-stroke:0.35px #343741;">earthquake</div><div class="t" style="right:376.0px;top:284.8px;font-size:28px;color:#343741;letter-spacing:-0.88px;-webkit-text-stroke:0.35px #343741;font-family:'Liberation Mono', monospace;text-align:right">3.5</div><div class="t" style="left:2221.0px;top:284.8px;font-size:28px;color:#343741;font-weight:400;letter-spacing:-0.88px;font-family:'Liberation Mono', monospace;-webkit-text-stroke:0.35px #343741;">https://earthquake…</div><div class="b" style="left:0px;top:324.0px;width:2542px;height:2.0px;background:#d3dae6"></div><svg class="b" style="left:12px;top:338.5px;" width="30" height="28" viewBox="0 0 30 28"><path d="M7.2,21.3 L21.8,7.5 M18.2,3.7 L23,3.7 Q25.2,3.7 25.2,6 L25.2,10.8 M3.3,18 L3.3,22.5 Q3.3,24.8 5.6,24.8 L10.6,24.8" fill="none" stroke="#343741" stroke-width="1.8" stroke-linecap="round"/></svg><div class="b" style="left:62px;top:336px;width:35px;height:34px;border:2px solid #c9cbcf;border-radius:8px;background:#fff"></div><div class="t" style="left:112.0px;top:344.2px;font-size:28px;color:#343741;font-weight:400;letter-spacing:-0.88px;font-family:'Liberation Mono', monospace;-webkit-text-stroke:0.35px #343741;">Jan 1, 2023 @ 17:05:49.810</div><div class="t" style="right:1693.0px;top:344.2px;font-size:28px;color:#343741;letter-spacing:-0.88px;-webkit-text-stroke:0.35px #343741;font-family:'Liberation Mono', monospace;text-align:right">31.74</div><div class="t" style="left:903.4px;top:344.2px;font-size:28px;color:#343741;font-weight:400;letter-spacing:-0.88px;font-family:'Liberation Mono', monospace;-webkit-text-stroke:0.35px #343741;">9 km NE of Pāhala,…</div><div class="t" style="right:1034.0px;top:344.2px;font-size:28px;color:#343741;letter-spacing:-0.88px;-webkit-text-stroke:0.35px #343741;font-family:'Liberation Mono', monospace;text-align:right">47</div><div class="t" style="left:1562.6px;top:344.2px;font-size:28px;color:#343741;font-weight:400;letter-spacing:-0.88px;font-family:'Liberation Mono', monospace;-webkit-text-stroke:0.35px #343741;">earthquake</div><div class="t" style="right:376.0px;top:344.2px;font-size:28px;color:#343741;letter-spacing:-0.88px;-webkit-text-stroke:0.35px #343741;font-family:'Liberation Mono', monospace;text-align:right">1.74</div><div class="t" style="left:2221.0px;top:344.2px;font-size:28px;color:#343741;font-weight:400;letter-spacing:-0.88px;font-family:'Liberation Mono', monospace;-webkit-text-stroke:0.35px #343741;">https://earthquake…</div><div class="b" style="left:0px;top:383.4000000000001px;width:2542px;height:2.0px;background:#d3dae6"></div><svg class="b" style="left:12px;top:397.9px;" width="30" height="28" viewBox="0 0 30 28"><path d="M7.2,21.3 L21.8,7.5 M18.2,3.7 L23,3.7 Q25.2,3.7 25.2,6 L25.2,10.8 M3.3,18 L3.3,22.5 Q3.3,24.8 5.6,24.8 L10.6,24.8" fill="none" stroke="#343741" stroke-width="1.8" stroke-linecap="round"/></svg><div class="b" style="left:62px;top:395px;width:35px;height:34px;border:2px solid #c9cbcf;border-radius:8px;background:#fff"></div><div class="t" style="left:112.0px;top:403.6px;font-size:28px;color:#343741;font-weight:400;letter-spacing:-0.88px;font-family:'Liberation Mono', monospace;-webkit-text-stroke:0.35px #343741;">Jan 1, 2023 @ 17:04:40.710</div><div class="t" style="right:1693.0px;top:403.6px;font-size:28px;color:#343741;letter-spacing:-0.88px;-webkit-text-stroke:0.35px #343741;font-family:'Liberation Mono', monospace;text-align:right">10.92</div><div class="t" style="left:903.4px;top:403.6px;font-size:28px;color:#343741;font-weight:400;letter-spacing:-0.88px;font-family:'Liberation Mono', monospace;-webkit-text-stroke:0.35px #343741;">16 km S of …</div><div class="t" style="right:1034.0px;top:403.6px;font-size:28px;color:#343741;letter-spacing:-0.88px;-webkit-text-stroke:0.35px #343741;font-family:'Liberation Mono', monospace;text-align:right">119</div><div class="t" style="left:1562.6px;top:403.6px;font-size:28px;color:#343741;font-weight:400;letter-spacing:-0.88px;font-family:'Liberation Mono', monospace;-webkit-text-stroke:0.35px #343741;">earthquake</div><div class="t" style="right:376.0px;top:403.6px;font-size:28px;color:#343741;letter-spacing:-0.88px;-webkit-text-stroke:0.35px #343741;font-family:'Liberation Mono', monospace;text-align:right">2.78</div><div class="t" style="left:2221.0px;top:403.6px;font-size:28px;color:#343741;font-weight:400;letter-spacing:-0.88px;font-family:'Liberation Mono', monospace;-webkit-text-stroke:0.35px #343741;">https://earthquake…</div><div class="b" style="left:0px;top:442.79999999999995px;width:2542px;height:2.0px;background:#d3dae6"></div><svg class="b" style="left:12px;top:457.3px;" width="30" height="28" viewBox="0 0 30 28"><path d="M7.2,21.3 L21.8,7.5 M18.2,3.7 L23,3.7 Q25.2,3.7 25.2,6 L25.2,10.8 M3.3,18 L3.3,22.5 Q3.3,24.8 5.6,24.8 L10.6,24.8" fill="none" stroke="#343741" stroke-width="1.8" stroke-linecap="round"/></svg><div class="b" style="left:62px;top:454px;width:35px;height:34px;border:2px solid #c9cbcf;border-radius:8px;background:#fff"></div><div class="t" style="left:112.0px;top:463.0px;font-size:28px;color:#343741;font-weight:400;letter-spacing:-0.88px;font-family:'Liberation Mono', monospace;-webkit-text-stroke:0.35px #343741;">Jan 1, 2023 @ 17:03:48.030</div><div class="t" style="right:1693.0px;top:463.0px;font-size:28px;color:#343741;letter-spacing:-0.88px;-webkit-text-stroke:0.35px #343741;font-family:'Liberation Mono', monospace;text-align:right">2.34</div><div class="t" style="left:903.4px;top:463.0px;font-size:28px;color:#343741;font-weight:400;letter-spacing:-0.88px;font-family:'Liberation Mono', monospace;-webkit-text-stroke:0.35px #343741;">10km SW of …</div><div class="t" style="right:1034.0px;top:463.0px;font-size:28px;color:#343741;letter-spacing:-0.88px;-webkit-text-stroke:0.35px #343741;font-family:'Liberation Mono', monospace;text-align:right">77</div><div class="t" style="left:1562.6px;top:463.0px;font-size:28px;color:#343741;font-weight:400;letter-spacing:-0.88px;font-family:'Liberation Mono', monospace;-webkit-text-stroke:0.35px #343741;">earthquake</div><div class="t" style="right:376.0px;top:463.0px;font-size:28px;color:#343741;letter-spacing:-0.88px;-webkit-text-stroke:0.35px #343741;font-family:'Liberation Mono', monospace;text-align:right">1.66</div><div class="t" style="left:2221.0px;top:463.0px;font-size:28px;color:#343741;font-weight:400;letter-spacing:-0.88px;font-family:'Liberation Mono', monospace;-webkit-text-stroke:0.35px #343741;">https://earthquake…</div></div><div class="b" style="left:20px;top:693px;width:2542px;height:54px;background:#f5f7fa"></div><div class="b" style="left:20px;top:691px;width:2578px;height:2px;background:#d3dae6"></div><div class="b" style="left:20px;top:747px;width:2542px;height:2px;background:#d3dae6"></div><div class="b" style="left:20px;top:691px;width:2px;height:522px;background:#d3dae6"></div><div class="b" style="left:2596px;top:691px;width:2px;height:522px;background:#d3dae6"></div><div class="b" style="left:20px;top:1212px;width:2578px;height:2px;background:#d3dae6"></div><div class="b" style="left:71px;top:693px;width:2px;height:54px;background:#d3dae6"></div><div class="b" style="left:124px;top:693px;width:2px;height:54px;background:#d3dae6"></div><div class="b" style="left:586px;top:693px;width:2px;height:54px;background:#d3dae6"></div><div class="b" style="left:915px;top:693px;width:2px;height:54px;background:#d3dae6"></div><div class="b" style="left:1244px;top:693px;width:2px;height:54px;background:#d3dae6"></div><div class="b" style="left:1573px;top:693px;width:2px;height:54px;background:#d3dae6"></div><div class="b" style="left:1903px;top:693px;width:2px;height:54px;background:#d3dae6"></div><div class="b" style="left:2232px;top:693px;width:2px;height:54px;background:#d3dae6"></div><div class="b" style="left:2561px;top:693px;width:2px;height:54px;background:#d3dae6"></div><div class="b" style="left:2576.6px;top:733.6px;width:8.0px;height:68.79999999999995px;background:#a9aeb6;border-radius:4px"></div><svg class="b" style="left:136px;top:706px;" width="30" height="28" viewBox="0 0 30 28"><path d="M14.75,2.7 L14.75,24.8 M2.9,12.7 L14.75,24.6 L26.6,12.7" fill="none" stroke="#1a1c21" stroke-width="2"/></svg><div class="t" style="left:177.6px;top:706.2px;font-size:28px;color:#343741;font-weight:700;letter-spacing:0px;font-family:'Liberation Sans', sans-serif;">@timestamp</div><svg class="b" style="left:350px;top:703px;" width="32" height="32" viewBox="0 0 32 32"><circle cx="16" cy="16" r="13" fill="none" stroke="#343741" stroke-width="2.2"/><path d="M14.5,8 L14.5,17.5 L23,17.5" fill="none" stroke="#343741" stroke-width="2.2"/></svg><div class="t" style="left:596.6px;top:706.2px;font-size:28px;color:#343741;font-weight:700;letter-spacing:0.35px;font-family:'Liberation Sans', sans-serif;">depth</div><div class="t" style="left:924.4px;top:706.2px;font-size:28px;color:#343741;font-weight:700;letter-spacing:0.05px;font-family:'Liberation Sans', sans-serif;">place</div><div class="t" style="left:1254.6px;top:706.2px;font-size:28px;color:#343741;font-weight:700;letter-spacing:-0.3px;font-family:'Liberation Sans', sans-serif;">sig</div><div class="t" style="left:1585.0px;top:706.2px;font-size:28px;color:#343741;font-weight:700;letter-spacing:0px;font-family:'Liberation Sans', sans-serif;">type</div><div class="t" style="left:1912.4px;top:706.2px;font-size:28px;color:#343741;font-weight:700;letter-spacing:-0.2px;font-family:'Liberation Sans', sans-serif;">mag</div><div class="t" style="left:2241.4px;top:706.2px;font-size:28px;color:#343741;font-weight:700;letter-spacing:0px;font-family:'Liberation Sans', sans-serif;">url</div><svg class="b" style="left:552px;top:711px;" width="24" height="18" viewBox="0 0 24 18"><path d="M2.5,4 L12,13.5 L21.5,4" fill="none" stroke="#343741" stroke-width="2.4"/></svg><svg class="b" style="left:881px;top:711px;" width="24" height="18" viewBox="0 0 24 18"><path d="M2.5,4 L12,13.5 L21.5,4" fill="none" stroke="#343741" stroke-width="2.4"/></svg><svg class="b" style="left:1210px;top:711px;" width="24" height="18" viewBox="0 0 24 18"><path d="M2.5,4 L12,13.5 L21.5,4" fill="none" stroke="#343741" stroke-width="2.4"/></svg><svg class="b" style="left:1539px;top:711px;" width="24" height="18" viewBox="0 0 24 18"><path d="M2.5,4 L12,13.5 L21.5,4" fill="none" stroke="#343741" stroke-width="2.4"/></svg><svg class="b" style="left:1869px;top:711px;" width="24" height="18" viewBox="0 0 24 18"><path d="M2.5,4 L12,13.5 L21.5,4" fill="none" stroke="#343741" stroke-width="2.4"/></svg><svg class="b" style="left:2198px;top:711px;" width="24" height="18" viewBox="0 0 24 18"><path d="M2.5,4 L12,13.5 L21.5,4" fill="none" stroke="#343741" stroke-width="2.4"/></svg><svg class="b" style="left:2527px;top:711px;" width="24" height="18" viewBox="0 0 24 18"><path d="M2.5,4 L12,13.5 L21.5,4" fill="none" stroke="#343741" stroke-width="2.4"/></svg><div class="t" style="left:36.0px;top:1244.8px;font-size:28px;color:#343741;font-weight:400;letter-spacing:-0.09px;font-family:'Liberation Sans', sans-serif;-webkit-text-stroke:0.55px #343741;">Rows per page: 100</div><svg class="b" style="left:303px;top:1249px;" width="28" height="18" viewBox="0 0 28 18"><path d="M3.5,4 L13.5,14 L23.5,4" fill="none" stroke="#343741" stroke-width="2.4"/></svg><svg class="b" style="left:2458px;top:1242px;" width="22" height="34" viewBox="0 0 22 34"><path d="M17,3 L5,16.5 L17,30" fill="none" stroke="#a2abba" stroke-width="2.6" stroke-linecap="round"/></svg><div class="t" style="left:2511.0px;top:1244.5px;font-size:30px;color:#0071c2;font-weight:700;letter-spacing:0px;font-family:'Liberation Sans', sans-serif;">1</div><div class="b" style="left:2512px;top:1271px;width:16px;height:3px;background:#0071c2"></div><svg class="b" style="left:2561px;top:1242px;" width="22" height="34" viewBox="0 0 22 34"><path d="M5,3 L17,16.5 L5,30" fill="none" stroke="#a2abba" stroke-width="2.6" stroke-linecap="round"/></svg><svg class="b" style="left:2568px;top:1263px;" width="18" height="18" viewBox="0 0 18 18"><path d="M13.5,2 L13.5,13.5 L2,13.5" fill="none" stroke="#69707d" stroke-width="3"/></svg><svg class="b" style="left:18px;top:513px;" width="2582" height="783" viewBox="0 0 2582 783"><rect x="1" y="1" width="2580" height="781" rx="12" fill="none" stroke="#98a2b3" stroke-width="2" stroke-dasharray="6 4"/></svg><div class="b" style="left:2545px;top:515px;width:53px;height:53px;background:#e9ebef;border-radius:0 11px 0 12px"></div><svg class="b" style="left:2551px;top:521px;" width="40" height="40" viewBox="0 0 40 40"><g transform="translate(20.5,20.5)"><path d="M-6.40,-11.09 L-3.82,-16.56 L3.82,-16.56 L6.40,-11.09 L12.43,-11.59 L16.26,-4.97 L12.80,0.00 L16.26,4.97 L12.43,11.59 L6.40,11.09 L3.82,16.56 L-3.82,16.56 L-6.40,11.09 L-12.43,11.59 L-16.26,4.97 L-12.80,-0.00 L-16.26,-4.97 L-12.43,-11.59Z" fill="none" stroke="#343741" stroke-width="2.3" stroke-linejoin="round"/><circle cx="0" cy="0" r="6" fill="none" stroke="#343741" stroke-width="2.3"/></g></svg><div class="b" style="left:18px;top:1313px;width:2582px;height:347px;background:#fff;border-radius:13px;box-shadow:0 2px 9px rgba(0,0,0,.06),0 6px 18px rgba(0,0,0,.05),0 13px 26px rgba(0,0,0,.04),0 30px 33px rgba(0,0,0,.03)"></div><div class="t" style="left:38.0px;top:1329.2px;font-size:28px;color:#98a2b3;font-weight:400;letter-spacing:0.56px;font-family:'Liberation Sans', sans-serif;-webkit-text-stroke:0.55px #98a2b3;">[No Title]</div><svg class="b" style="left:180px;top:1418px;" width="2350" height="2" viewBox="0 0 2350 2"><path d="M0,1 L2350,1" stroke="#e4e7ed" stroke-width="2" stroke-dasharray="8.8 8.8"/></svg><svg class="b" style="left:180px;top:1492.4px;" width="2350" height="2" viewBox="0 0 2350 2"><path d="M0,1 L2350,1" stroke="#e4e7ed" stroke-width="2" stroke-dasharray="8.8 8.8"/></svg><svg class="b" style="left:180px;top:1567px;" width="2350" height="2" viewBox="0 0 2350 2"><path d="M0,1 L2350,1" stroke="#e4e7ed" stroke-width="2" stroke-dasharray="8.8 8.8"/></svg><div class="b" style="left:180px;top:1419px;width:20px;height:179px;background:rgba(152,162,179,0.3)"></div><div class="b" style="left:2507px;top:1419px;width:22px;height:179px;background:rgba(152,162,179,0.3)"></div><div class="b" style="left:768px;top:1568px;width:40px;height:30px;background:#54b399"></div><div class="b" style="left:1943px;top:1419px;width:40px;height:179px;background:#54b399"></div><div class="b" style="left:2153px;top:1568px;width:40px;height:30px;background:#54b399"></div><div class="t" style="right:2496px;top:1406.5px;font-size:22.5px;color:#69707d;text-align:right">4</div><div class="t" style="right:2496px;top:1480.9px;font-size:22.5px;color:#69707d;text-align:right">3.5</div><div class="t" style="right:2496px;top:1555.9px;font-size:22.5px;color:#69707d;text-align:right">3</div><svg class="b" style="left:18px;top:1313px;" width="2582" height="347" viewBox="0 0 2582 347"><rect x="1" y="1" width="2580" height="345" rx="12" fill="none" stroke="#98a2b3" stroke-width="2" stroke-dasharray="6 4"/></svg><div class="b" style="left:2545px;top:1315px;width:53px;height:53px;background:#e9ebef;border-radius:0 11px 0 12px"></div><svg class="b" style="left:2551px;top:1321px;" width="40" height="40" viewBox="0 0 40 40"><g transform="translate(20.5,20.5)"><path d="M-6.40,-11.09 L-3.82,-16.56 L3.82,-16.56 L6.40,-11.09 L12.43,-11.59 L16.26,-4.97 L12.80,0.00 L16.26,4.97 L12.43,11.59 L6.40,11.09 L3.82,16.56 L-3.82,16.56 L-6.40,11.09 L-12.43,11.59 L-16.26,4.97 L-12.80,-0.00 L-16.26,-4.97 L-12.43,-11.59Z" fill="none" stroke="#343741" stroke-width="2.3" stroke-linejoin="round"/><circle cx="0" cy="0" r="6" fill="none" stroke="#343741" stroke-width="2.3"/></g></svg><svg class="b" style="left:0px;top:1570px;" width="28" height="28" viewBox="0 0 28 28"><path d="M0,0 A28,28 0 0 0 28,28 L0,28 Z" fill="#171717"/></svg><svg class="b" style="left:2626px;top:1570px;" width="28" height="28" viewBox="0 0 28 28"><path d="M28,0 A28,28 0 0 1 0,28 L28,28 Z" fill="#171717"/></svg>
</body></html>
